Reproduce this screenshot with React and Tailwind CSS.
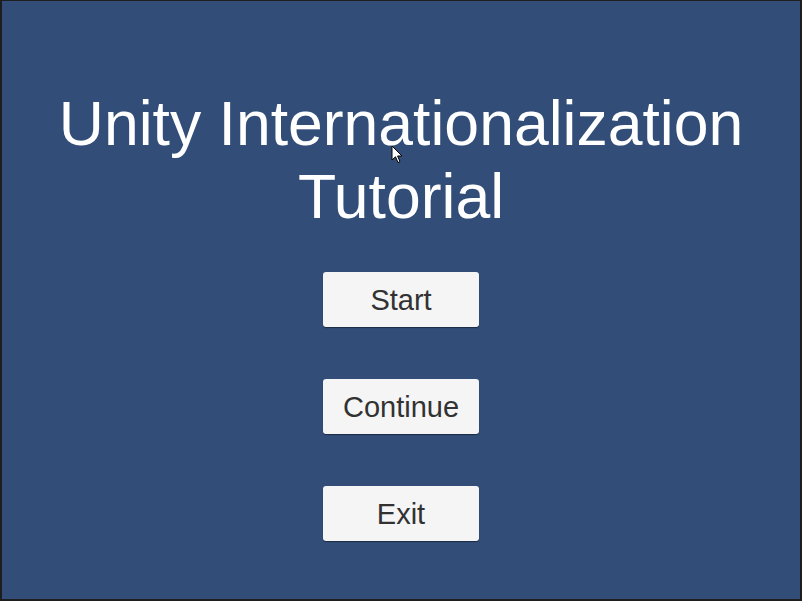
export default function App() {
  const btn =
    "w-[156px] h-[55px] flex items-center justify-center pt-[2px] bg-[#f5f5f5] rounded-[3px] shadow-[0_1px_1px_rgba(0,0,0,0.45)] text-[29px] text-[#323232] leading-none";
  return (
    <div
      className="w-[802px] h-[601px] bg-[#1e1e1e] pt-[1px] pl-[2px] pr-[2px] pb-[2px]"
      style={{ fontFamily: '"Liberation Sans", Arial, sans-serif' }}
    >
      <div className="relative w-full h-full bg-[#324e78] flex flex-col items-center">
        <div className="mt-[86px] text-white text-[62.5px] leading-[73px] text-center">
          <div>Unity Internationalization</div>
          <div>Tutorial</div>
        </div>
        <div className="mt-[39px] flex flex-col items-center gap-[52px]">
          <div className={btn}>Start</div>
          <div className={btn}>Continue</div>
          <div className={btn}>Exit</div>
        </div>
        <svg
          className="absolute left-[389px] top-[144px]"
          width="14"
          height="20"
          viewBox="0 0 14 20"
        >
          <path
            d="M1 1 L1 15 L4.5 11.8 L7 17.5 L9 16.6 L6.6 11 L11 11 Z"
            fill="white"
            stroke="black"
            strokeWidth="1"
            strokeLinejoin="round"
          />
        </svg>
      </div>
    </div>
  );
}
